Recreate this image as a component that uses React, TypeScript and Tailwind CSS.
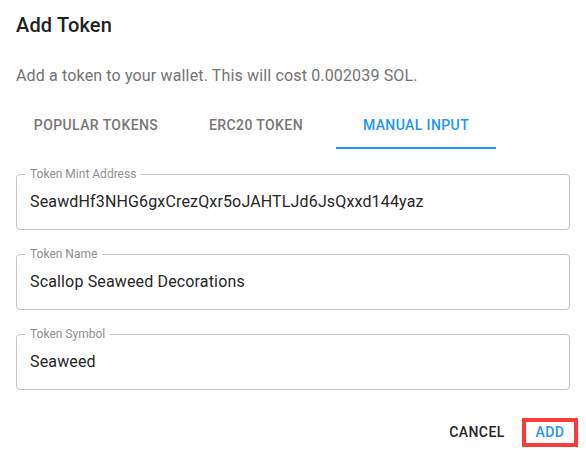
import { useState } from "react";

const tabs = ["Popular Tokens", "ERC20 Token", "Manual Input"];

const fields = [
  { label: "Token Mint Address", value: "SeawdHf3NHG6gxCrezQxr5oJAHTLJd6JsQxxd144yaz" },
  { label: "Token Name", value: "Scallop Seaweed Decorations" },
  { label: "Token Symbol", value: "Seaweed" },
];

function Field({ label, value }: { label: string; value: string }) {
  return (
    <div className="relative flex h-14 items-center rounded border border-[#c4c4c4] px-[13px]">
      <span className="absolute -top-[9px] left-[8px] bg-white px-[5px] text-[12px] leading-4 text-[#8f8f8f]">
        {label}
      </span>
      <span className="text-[16px] leading-6 tracking-[0.15px] text-[#262626]">{value}</span>
    </div>
  );
}

export default function App() {
  const [active, setActive] = useState(2);

  return (
    <div className="h-[456px] w-[586px] bg-white px-4 font-['Roboto',sans-serif]">
      <h2 className="h-[41px] pt-[9px] text-[20px] leading-8 font-medium tracking-[0.15px] text-[#212121]">
        Add Token
      </h2>
      <p className="mt-[23px] text-[16px] leading-6 tracking-[0.15px] text-[#737373]">
        Add a token to your wallet. This will cost 0.002039 SOL.
      </p>

      {/* Tabs */}
      <div className="mt-[13px] flex h-12">
        {tabs.map((t, i) => (
          <button
            key={t}
            onClick={() => setActive(i)}
            className={`relative flex w-40 items-center justify-center text-[14px] font-medium tracking-[0.4px] uppercase ${
              i === active ? "text-[#2196f3]" : "text-[#777777]"
            }`}
          >
            {t}
            {i === active && (
              <span className="absolute right-0 bottom-0 left-0 h-[2px] bg-[#2196f3]" />
            )}
          </button>
        ))}
      </div>

      <div className="mt-[25px] flex flex-col gap-6">
        {fields.map((f) => (
          <Field key={f.label} label={f.label} value={f.value} />
        ))}
      </div>

      <div className="-mr-2 mt-7 flex items-center justify-end">
        <button className="w-16 text-center text-[14px] font-medium tracking-[0.4px] text-[#262626] uppercase">
          Cancel
        </button>
        <div className="ml-[13px] flex h-[29px] w-14 items-center justify-center border-4 border-[#fb3a3a]">
          <button className="text-[14px] font-medium tracking-[0.4px] text-[#2196f3] uppercase">
            Add
          </button>
        </div>
      </div>
    </div>
  );
}
